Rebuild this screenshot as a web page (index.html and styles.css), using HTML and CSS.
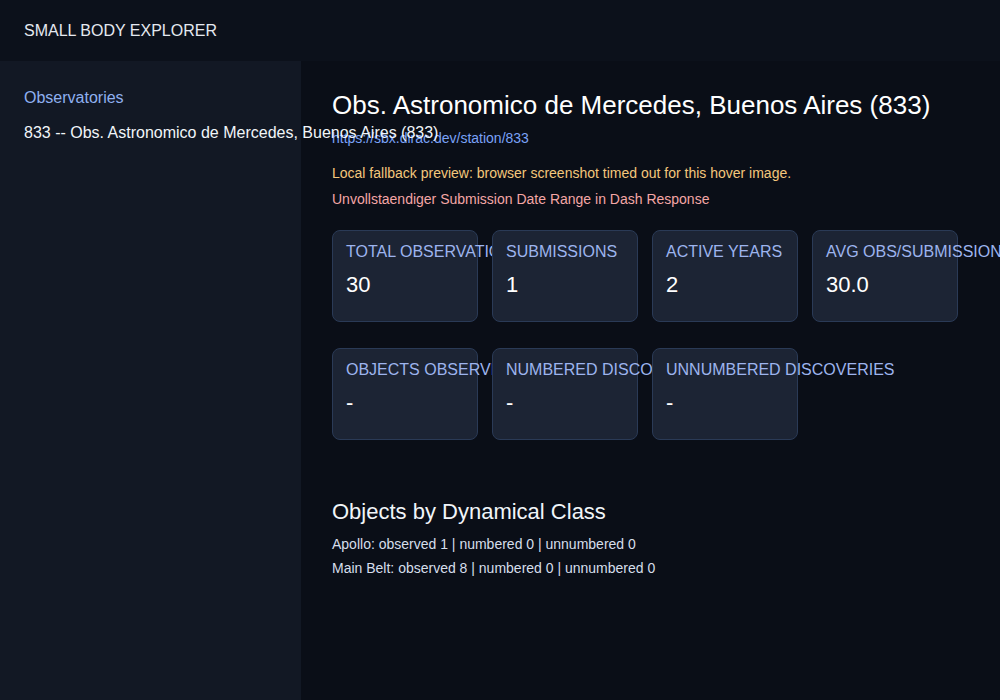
FILE: index.html
```html
<!DOCTYPE HTML>
<html lang="en">
<head>
    <meta charset="UTF-8">
    <meta name="viewport" content="width=device-width, initial-scale=1.0">
    <title>Small Body Explorer</title>
    <link rel="stylesheet" href="styles.css">
</head>
<body>
    <header class="topbar">SMALL BODY EXPLORER</header>

    <div class="layout">
        <aside class="sidebar">
            <div class="side-title">Observatories</div>
            <div class="side-item">833 -- Obs. Astronomico de Mercedes, Buenos Aires (833)</div>
        </aside>

        <main class="content">
            <h1 class="station-title">Obs. Astronomico de Mercedes, Buenos Aires (833)</h1>
            <a class="station-link" href="#">https://sbx.dirac.dev/station/833</a>
            <p class="note">Local fallback preview: browser screenshot timed out for this hover image.</p>
            <p class="warn">Unvollstaendiger Submission Date Range in Dash Response</p>

            <div class="cards">
                <div class="card">
                    <div class="card-label">TOTAL OBSERVATIONS</div>
                    <div class="card-value">30</div>
                </div>
                <div class="card">
                    <div class="card-label">SUBMISSIONS</div>
                    <div class="card-value">1</div>
                </div>
                <div class="card">
                    <div class="card-label">ACTIVE YEARS</div>
                    <div class="card-value">2</div>
                </div>
                <div class="card">
                    <div class="card-label">AVG OBS/SUBMISSION</div>
                    <div class="card-value">30.0</div>
                </div>
            </div>

            <div class="cards">
                <div class="card">
                    <div class="card-label">OBJECTS OBSERVED</div>
                    <div class="card-value">-</div>
                </div>
                <div class="card">
                    <div class="card-label">NUMBERED DISCOVERIES</div>
                    <div class="card-value">-</div>
                </div>
                <div class="card">
                    <div class="card-label">UNNUMBERED DISCOVERIES</div>
                    <div class="card-value">-</div>
                </div>
            </div>

            <h2 class="section-title">Objects by Dynamical Class</h2>
            <div class="class-row">Apollo: observed 1 | numbered 0 | unnumbered 0</div>
            <div class="class-row">Main Belt: observed 8 | numbered 0 | unnumbered 0</div>
        </main>
    </div>
</body>
</html>
```

FILE: styles.css
```css
html, body {
    height: 100%;
}

body {
    margin: 0;
    background-color: #0a0e17;
    color: #f1f5f9;
    font-family: "Liberation Sans", Arial, sans-serif;
    display: flex;
    flex-direction: column;
}

.topbar {
    height: 61px;
    box-sizing: border-box;
    padding: 1px 24px 0;
    display: flex;
    align-items: center;
    font-size: 16px;
    color: #e5e9f0;
    background-color: #0c111b;
}

.layout {
    flex: 1;
    display: flex;
}

.sidebar {
    width: 301px;
    flex-shrink: 0;
    box-sizing: border-box;
    padding: 25px 24px;
    background-color: #121824;
    white-space: nowrap;
    position: relative;
    z-index: 1;
}

.side-title {
    font-size: 16px;
    line-height: 24px;
    color: #8fb0f0;
}

.side-item {
    margin-top: 11px;
    font-size: 16px;
    line-height: 24px;
    color: #f1f5f9;
}

.content {
    flex: 1;
    padding: 28px 32px 32px 31px;
}

.station-title {
    margin: 0;
    font-size: 26px;
    line-height: 32px;
    font-weight: normal;
    color: #ffffff;
}

.station-link {
    display: block;
    margin-top: 7px;
    font-size: 14px;
    line-height: 20px;
    color: #7aa2f7;
    text-decoration: none;
}

.note {
    margin: 15px 0 0;
    font-size: 14px;
    line-height: 20px;
    color: #f4c77c;
}

.warn {
    margin: 6px 0 0;
    font-size: 14px;
    line-height: 20px;
    color: #f4a6a6;
}

.cards {
    display: flex;
    gap: 14px;
    margin-top: 21px;
}

.cards + .cards {
    margin-top: 26px;
}

.card {
    width: 146px;
    height: 92px;
    box-sizing: border-box;
    padding: 12px 13px;
    background-color: #1c2434;
    border: 1px solid #2a3a56;
    border-radius: 8px;
    white-space: nowrap;
}

.card-label {
    font-size: 16px;
    line-height: 18px;
    color: #9db4ee;
}

.card-value {
    margin-top: 12px;
    font-size: 22px;
    line-height: 24px;
    color: #ffffff;
}

.section-title {
    margin: 58px 0 0;
    font-size: 22px;
    line-height: 28px;
    font-weight: normal;
    color: #f1f5f9;
}

.class-row {
    font-size: 14px;
    line-height: 24px;
    color: #d6deeb;
}

.section-title + .class-row {
    margin-top: 6px;
}
```
